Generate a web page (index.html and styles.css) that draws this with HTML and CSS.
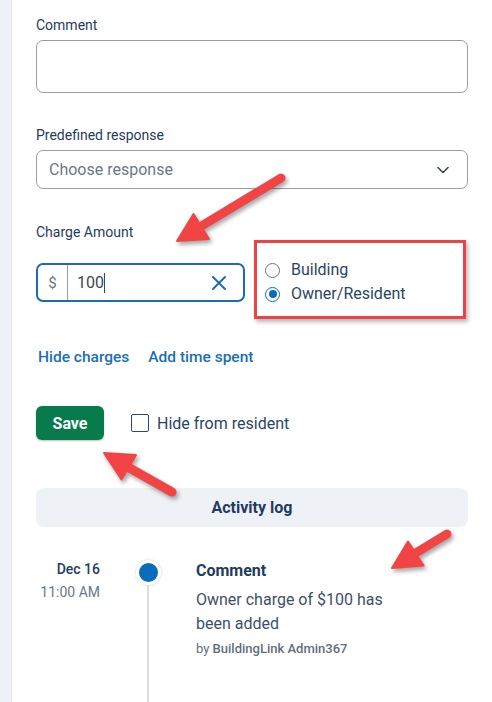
FILE: index.html
```html
<!DOCTYPE html>
<html>
<head>
<meta charset="utf-8">
<link rel="stylesheet" href="styles.css">
</head>
<body>
<div class="page">
  <div class="rail"></div>
  <div class="main">
    <div class="field">
      <div class="label">Comment</div>
      <div class="textarea"></div>
    </div>
    <div class="field">
      <div class="label">Predefined response</div>
      <div class="select">
        <span class="placeholder">Choose response</span>
        <svg class="chevron" width="12" height="8" viewBox="0 0 12 8"><path d="M1 1.5 L6 6.5 L11 1.5" fill="none" stroke="#3a4756" stroke-width="1.6" stroke-linecap="round" stroke-linejoin="round"/></svg>
      </div>
    </div>
    <div class="field charge">
      <div class="label">Charge Amount</div>
      <div class="charge-row">
        <div class="money">
          <span class="cur">$</span>
          <span class="val">100<span class="caret"></span></span>
          <svg class="clear" width="16" height="16" viewBox="0 0 16 16"><path d="M2 2 L14 14 M14 2 L2 14" stroke="#1a6db5" stroke-width="2" stroke-linecap="round"/></svg>
        </div>
        <div class="radios">
          <div class="radio"><span class="circle"></span>Building</div>
          <div class="radio"><span class="circle on"></span>Owner/Resident</div>
        </div>
      </div>
    </div>
    <div class="links">
      <span class="link">Hide charges</span>
      <span class="link">Add time spent</span>
    </div>
    <div class="actions">
      <button class="save">Save</button>
      <label class="check"><span class="box"></span>Hide from resident</label>
    </div>
    <div class="log-bar">Activity log</div>
    <div class="timeline">
      <div class="when">
        <div class="date">Dec 16</div>
        <div class="time">11:00 AM</div>
      </div>
      <div class="track">
        <span class="dot"></span>
        <span class="line"></span>
      </div>
      <div class="entry">
        <div class="entry-title">Comment</div>
        <div class="entry-text">Owner charge of $100 has been added</div>
        <div class="entry-by">by <b>BuildingLink Admin367</b></div>
      </div>
    </div>
  </div>
  <svg class="arrows" width="492" height="702" viewBox="0 0 492 702">
    <g class="arrow">
      <line x1="281" y1="178" x2="203" y2="225"/>
      <polygon points="177,241 193.5,214 209,239"/>
    </g>
    <g class="arrow">
      <line x1="172" y1="492" x2="126" y2="466"/>
      <polygon points="104,453 121.5,479.5 136,455"/>
    </g>
    <g class="arrow">
      <line x1="447" y1="534" x2="414" y2="554"/>
      <polygon points="392,568 408,541.5 423.5,565.5"/>
    </g>
  </svg>
</div>
</body>
</html>
```

FILE: styles.css
```css
* { box-sizing: border-box; }
html, body { margin: 0; padding: 0; background: #fff; }
body { font-family: Roboto, "Noto Sans", Arial, sans-serif; color: #1f3b5e; }

.page {
  position: relative;
  width: 492px;
  height: 702px;
  display: flex;
  overflow: hidden;
}
.rail {
  width: 12px;
  flex: none;
  background: #eef2f7;
  border-right: 1px solid #e4e9ef;
}
.main {
  flex: 1;
  padding: 17px 24px 0 24px;
  display: flex;
  flex-direction: column;
}

.label {
  font-size: 14px;
  line-height: 16px;
  font-weight: 400;
  color: #1f3b5e;
  margin-bottom: 7px;
}
.field + .field { margin-top: 34px; }
.field.charge { margin-top: 35px; }

.textarea {
  height: 53px;
  border: 1px solid #9a9ea3;
  border-radius: 7px;
}
.select {
  height: 39px;
  border: 1px solid #9a9ea3;
  border-radius: 7px;
  display: flex;
  align-items: center;
  justify-content: space-between;
  padding: 0 18px 0 12px;
}
.placeholder { font-size: 16px; color: #6a7888; }

.charge-row {
  display: flex;
  align-items: flex-start;
  gap: 9px;
  margin-top: -7px;
}
.money {
  margin-top: 23px;
  width: 209px;
  height: 39px;
  border: 2px solid #1a6db5;
  border-radius: 7px;
  display: flex;
  align-items: center;
}
.cur {
  width: 30px;
  height: 100%;
  border-right: 1px solid #8fa0b4;
  display: flex;
  align-items: center;
  justify-content: center;
  font-size: 15px;
  color: #667687;
}
.val {
  flex: 1;
  padding-left: 9px;
  font-size: 16px;
  color: #3a4756;
  display: flex;
  align-items: center;
}
.caret {
  display: inline-block;
  width: 1px;
  height: 20px;
  background: #1a4f8a;
}
.clear { margin-right: 16px; }

.radios {
  margin-top: 0;
  width: 212px;
  height: 79px;
  border: 3px solid #ef4245;
  box-shadow: 2px 3px 4px rgba(0,0,0,0.28);
  padding: 15px 0 0 8px;
}
.radio {
  display: flex;
  align-items: center;
  gap: 11px;
  font-size: 16px;
  line-height: 24px;
  color: #2a4565;
}
.circle {
  width: 15px;
  height: 15px;
  border-radius: 50%;
  border: 1.5px solid #707478;
  display: inline-flex;
  align-items: center;
  justify-content: center;
}
.circle.on { border-color: #0a6cbc; }
.circle.on::after {
  content: "";
  width: 8px;
  height: 8px;
  border-radius: 50%;
  background: #0a6cbc;
}

.links {
  margin-top: 28px;
  display: flex;
  gap: 19px;
  padding-left: 2px;
}
.link {
  font-size: 15.5px;
  line-height: 20px;
  font-weight: 500;
  color: #1a6fb6;
}

.actions {
  margin-top: 39px;
  display: flex;
  align-items: center;
  gap: 27px;
}
.save {
  width: 68px;
  height: 34px;
  border: none;
  border-radius: 6px;
  background: #097a4c;
  color: #fff;
  font-family: inherit;
  font-size: 16px;
  font-weight: 700;
  box-shadow: 0 1px 2px rgba(0,0,0,0.25);
  padding: 0;
}
.check {
  display: flex;
  align-items: center;
  gap: 8px;
  font-size: 16px;
  color: #2a4565;
}
.box {
  width: 18px;
  height: 18px;
  border: 1.5px solid #2b4a6e;
  border-radius: 2px;
}

.log-bar {
  margin-top: 48px;
  height: 39px;
  border-radius: 8px;
  background: #eef2f7;
  display: flex;
  align-items: center;
  justify-content: center;
  font-size: 16px;
  font-weight: 700;
  color: #1f3b5e;
}

.timeline {
  margin-top: 32px;
  flex: 1;
  display: grid;
  grid-template-columns: 64px 96px 1fr;
}
.when { text-align: right; }
.date {
  font-size: 14px;
  line-height: 20px;
  font-weight: 500;
  color: #22405f;
}
.time {
  margin-top: 3px;
  font-size: 14px;
  line-height: 20px;
  color: #6a7888;
}
.track {
  display: flex;
  flex-direction: column;
  align-items: center;
  padding-top: 1px;
}
.dot {
  width: 25px;
  height: 25px;
  border-radius: 50%;
  background: #0a6cbc;
  border: 3px solid #fff;
  box-shadow: 0 0 3px rgba(0,0,0,0.18);
  flex: none;
}
.line {
  flex: 1;
  width: 2px;
  background: #dcdcdc;
}
.entry { padding-top: 2px; }
.entry-title {
  font-size: 16px;
  line-height: 20px;
  font-weight: 700;
  color: #1f3b5e;
}
.entry-text {
  margin-top: 7px;
  width: 200px;
  font-size: 16px;
  line-height: 24px;
  color: #3d5068;
}
.entry-by {
  margin-top: 5px;
  font-size: 13px;
  line-height: 16px;
  color: #5f6e80;
}
.entry-by b { font-weight: 500; }

.arrows {
  position: absolute;
  left: 0;
  top: 0;
  pointer-events: none;
}
.arrow {
  filter: drop-shadow(2px 3px 2px rgba(0,0,0,0.35));
}
.arrow line {
  stroke: #f24444;
  stroke-width: 9;
  stroke-linecap: round;
}
.arrow polygon {
  fill: #f24444;
  stroke: #f24444;
  stroke-width: 2;
  stroke-linejoin: round;
}
```
